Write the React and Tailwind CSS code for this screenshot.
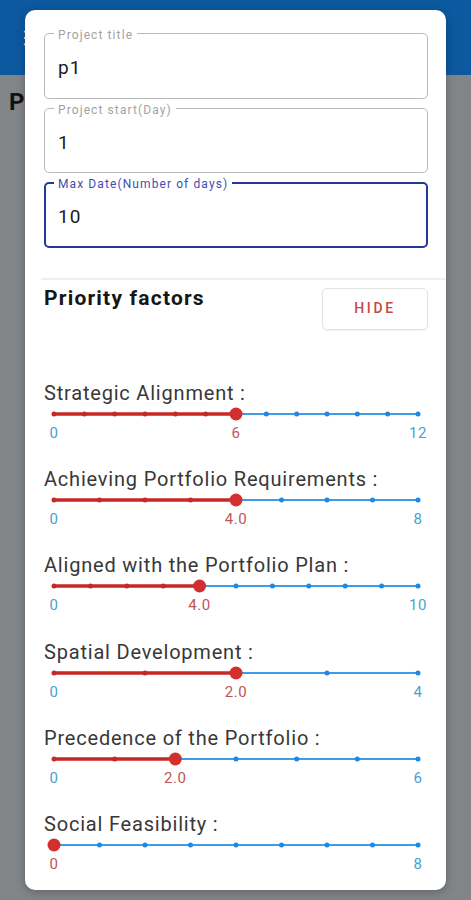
import React from 'react'
import { Menu } from 'lucide-react'

const factors = [
    { label: 'Strategic Alignment :', max: 12, value: 6, shown: '6' },
    { label: 'Achieving Portfolio Requirements :', max: 8, value: 4, shown: '4.0' },
    { label: 'Aligned with the Portfolio Plan :', max: 10, value: 4, shown: '4.0' },
    { label: 'Spatial Development :', max: 4, value: 2, shown: '2.0' },
    { label: 'Precedence of the Portfolio :', max: 6, value: 2, shown: '2.0' },
    { label: 'Social Feasibility :', max: 8, value: 0, shown: '0' },
]

const TRACK_START = 10
const TRACK_END = 374

const OutlinedField = ({ label, value, focused }) => (
    <div
        className={`relative h-[65.5px] rounded-[5px] ${
            focused ? 'border-2 border-[#24389a]' : 'border border-[#b9b9b9]'
        }`}
    >
        <span
            className={`absolute ${focused ? 'top-[-7px] left-[8px]' : 'top-[-6px] left-[9px]'} bg-white px-[4px] text-[12px] leading-[14px] tracking-[1.1px] ${
                focused ? 'text-[#3f4fb0]' : 'text-[#a3a3a3]'
            }`}
        >
            {label}
        </span>
        <div className={`${focused ? 'pt-[22px] pl-[12px]' : 'pt-[23px] pl-[13px]'} text-[19px] leading-[22px] tracking-[1px] text-[#1c1c1c]`}>
            {value}
        </div>
    </div>
)

const FactorSlider = ({ label, max, value, shown }) => {
    const span = TRACK_END - TRACK_START
    const pos = (v) => TRACK_START + (span * v) / max
    const thumb = pos(value)
    const ticks = Array.from({ length: max + 1 }, (_, i) => i)

    return (
        <div className="flex flex-col">
            <div className="h-[22px] text-[20px] leading-[22px] tracking-[0.8px] text-[#383838]">{label}</div>
            <svg width="384" height="20" className="block">
                <line x1={thumb} y1="10" x2={TRACK_END} y2="10" stroke="#3f9be4" strokeWidth="2" />
                {value > 0 && (
                    <line
                        x1={TRACK_START}
                        y1="10"
                        x2={thumb}
                        y2="10"
                        stroke="#c62828"
                        strokeWidth="3.5"
                        strokeLinecap="round"
                    />
                )}
                {ticks.map((i) => (
                    <circle
                        key={i}
                        cx={pos(i)}
                        cy="10"
                        r="2.5"
                        fill={i <= value ? '#c62828' : '#1e88e5'}
                    />
                ))}
                <circle cx={thumb} cy="10" r="6.5" fill="#d32f2f" />
            </svg>
            <div className="relative h-[18px] text-[15px] leading-[18px] tracking-[0.6px]">
                {value > 0 && (
                    <span className="absolute left-[10px] -translate-x-1/2 text-[#4b9fd0]">0</span>
                )}
                <span className="absolute -translate-x-1/2 text-[#bf5458]" style={{ left: thumb }}>
                    {shown}
                </span>
                <span className="absolute left-[374px] -translate-x-1/2 text-[#4b9fd0]">{max}</span>
            </div>
        </div>
    )
}

export default function App() {
    return (
        <div className="relative h-[900px] w-[471px] overflow-hidden bg-[#828588] font-['Roboto',sans-serif]">
            {/* Page behind the dialog (dimmed) */}
            <div className="flex h-[75px] items-center bg-[#0c59a0] pl-[21px]">
                <Menu size={22} className="text-[#d7e3f0]" />
            </div>
            <div className="pl-[9px] pt-[13px] text-[24px] font-bold leading-[28px] text-[#111]">P</div>

            {/* Dialog */}
            <div className="absolute left-[25px] top-[10px] h-[880px] w-[421px] rounded-[10px] bg-white pl-[19px] pr-[18px] pt-[23px] shadow-[0_2px_8px_rgba(0,0,0,0.25)]">
                <div className="flex flex-col gap-[9px]">
                    <OutlinedField label="Project title" value="p1" />
                    <OutlinedField label="Project start(Day)" value="1" />
                    <OutlinedField label="Max Date(Number of days)" value="10" focused />
                </div>

                <div className="ml-[-3px] mr-[-18px] mt-[30px] h-[2px] bg-[#efefef]" />

                <div className="mt-[8px] flex items-start justify-between">
                    <div className="mt-[-2px] text-[21px] font-bold leading-[25px] tracking-[1.2px] text-[#161616]">Priority factors</div>
                    <button className="h-[42px] w-[106px] rounded-[5px] border border-[#e2e2e2] text-[14px] font-medium tracking-[2.6px] text-[#c9474a] shadow-[0_1px_2px_rgba(0,0,0,0.06)]">
                        HIDE
                    </button>
                </div>

                <div className="mt-[52px] flex flex-col gap-[26.4px]">
                    {factors.map((f) => (
                        <FactorSlider key={f.label} {...f} />
                    ))}
                </div>
            </div>
        </div>
    )
}
